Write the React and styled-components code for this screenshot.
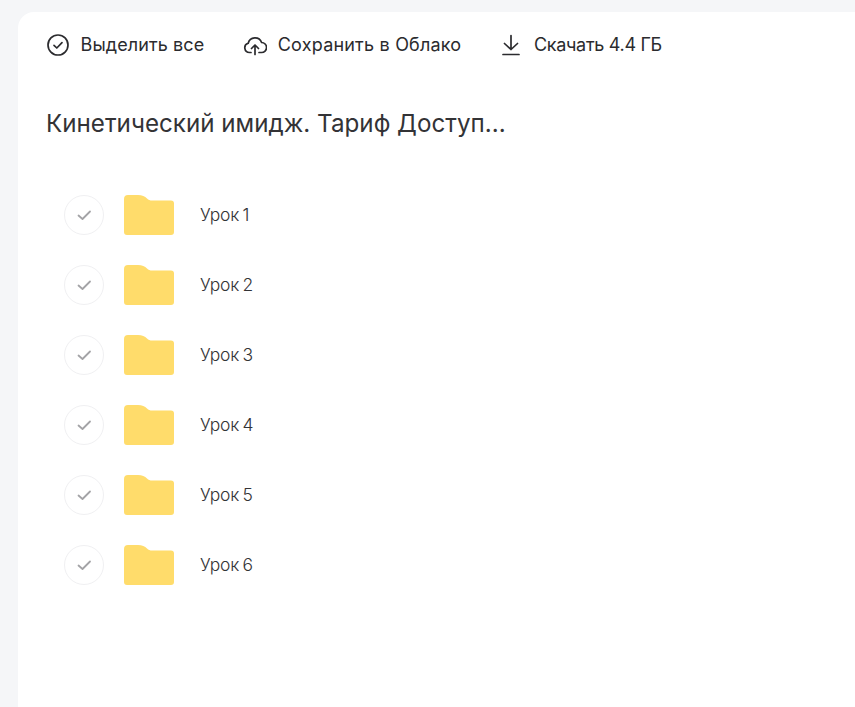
import React from "react";
import styled, { createGlobalStyle } from "styled-components";

const GlobalStyle = createGlobalStyle`
  html, body {
    margin: 0;
    padding: 0;
    height: 100%;
    overflow: hidden;
    background-color: #f5f6f8;
    font-family: "Inter", "Noto Sans", sans-serif;
  }
`;

const Page = styled.div`
  height: 707px;
  padding: 12px 0 0 18px;
  box-sizing: border-box;
`;

const Card = styled.main`
  height: 695px;
  background-color: #ffffff;
  border-radius: 16px 0 0 0;
  padding: 16px 0 0 28px;
  box-sizing: border-box;
`;

const Toolbar = styled.div`
  display: flex;
  align-items: center;
  height: 34px;
`;

const ToolButton = styled.button`
  display: flex;
  align-items: center;
  gap: 10.5px;
  margin-right: 39px;
  padding: 0;
  border: none;
  background: none;
  font-family: inherit;
  font-size: 18px;
  line-height: 22px;
  letter-spacing: ${({ $tracking }) => $tracking}px;
  font-weight: 400;
  color: #2b2b2e;
  white-space: nowrap;
`;

const ToolLabel = styled.span`
  padding-bottom: 1px;
`;

const Title = styled.h1`
  margin: 42px 0 0;
  font-size: 24.2px;
  line-height: 40px;
  font-weight: 400;
  color: #333336;
`;

const List = styled.ul`
  list-style: none;
  margin: 51px 0 0 18px;
  padding: 0;
  display: flex;
  flex-direction: column;
  gap: 30px;
`;

const Row = styled.li`
  display: flex;
  align-items: center;
  height: 40px;
`;

const Check = styled.span`
  display: flex;
  align-items: center;
  justify-content: center;
  width: 40px;
  height: 40px;
  box-sizing: border-box;
  border: 1px solid #f0f0f2;
  border-radius: 50%;
  margin-right: 20px;
`;

const Name = styled.span`
  margin-left: 26px;
  padding-bottom: 2px;
  font-size: 17.5px;
  font-weight: 300;
  letter-spacing: -0.2px;
  word-spacing: -1.5px;
  color: #333336;
`;

const CheckCircleIcon = () => (
  <svg width="24" height="24" viewBox="0 0 24 24" fill="none" stroke="#2b2b2e" strokeWidth="1.7" strokeLinecap="round" strokeLinejoin="round">
    <circle cx="12" cy="12" r="10" />
    <path d="M8 12.4l2.8 2.6L16 9.6" />
  </svg>
);

const CloudIcon = () => (
  <svg width="24" height="24" viewBox="0 0 24 24" fill="none" stroke="#2b2b2e" strokeWidth="1.7" strokeLinecap="round" strokeLinejoin="round">
    <path d="M8 19.500H6.500a4.750 4.750 0 0 1-1.300-9.300A7 7 0 0 1 18.600 9.500a5 5 0 0 1-.1 10H16" />
    <path d="M12 21.500V12M8.500 15.500l3.500-3.500 3.500 3.500" />
  </svg>
);

const DownloadIcon = () => (
  <svg width="23" height="24" viewBox="0 0 23 24" fill="none" stroke="#2b2b2e" strokeWidth="1.7" strokeLinecap="round" strokeLinejoin="round">
    <path d="M11 2.500V16.500M4.500 10.500l6.500 6 6.500-6" />
    <path d="M3 21.500h16" />
  </svg>
);

const TickIcon = () => (
  <svg width="16" height="16" viewBox="0 0 16 16" fill="none" stroke="#a3a3a6" strokeWidth="1.8" strokeLinecap="round" strokeLinejoin="round">
    <path d="M2.500 8.500l4 3.500L14 4.500" />
  </svg>
);

const FolderIcon = () => (
  <svg width="50" height="40" viewBox="0 0 50 40">
    <path
      fill="#ffdc6b"
      d="M0 4a4 4 0 0 1 4-4h10c4 0 7 1.500 9 3.500 1.500 1.500 3 2 5 2h19a3 3 0 0 1 3 3V37a3 3 0 0 1-3 3H3a3 3 0 0 1-3-3z"
    />
  </svg>
);

const lessons = ["Урок 1", "Урок 2", "Урок 3", "Урок 4", "Урок 5", "Урок 6"];

export default function App() {
  return (
    <>
      <GlobalStyle />
      <Page>
        <Card>
          <Toolbar>
            <ToolButton $tracking={0.1}>
              <CheckCircleIcon />
              <ToolLabel>Выделить все</ToolLabel>
            </ToolButton>
            <ToolButton $tracking={0.2}>
              <CloudIcon />
              <ToolLabel>Сохранить в Облако</ToolLabel>
            </ToolButton>
            <ToolButton $tracking={-0.3}>
              <DownloadIcon />
              <ToolLabel>Скачать 4.4 ГБ</ToolLabel>
            </ToolButton>
          </Toolbar>
          <Title>Кинетический имидж. Тариф Доступ...</Title>
          <List>
            {lessons.map((name) => (
              <Row key={name}>
                <Check>
                  <TickIcon />
                </Check>
                <FolderIcon />
                <Name>{name}</Name>
              </Row>
            ))}
          </List>
        </Card>
      </Page>
    </>
  );
}
